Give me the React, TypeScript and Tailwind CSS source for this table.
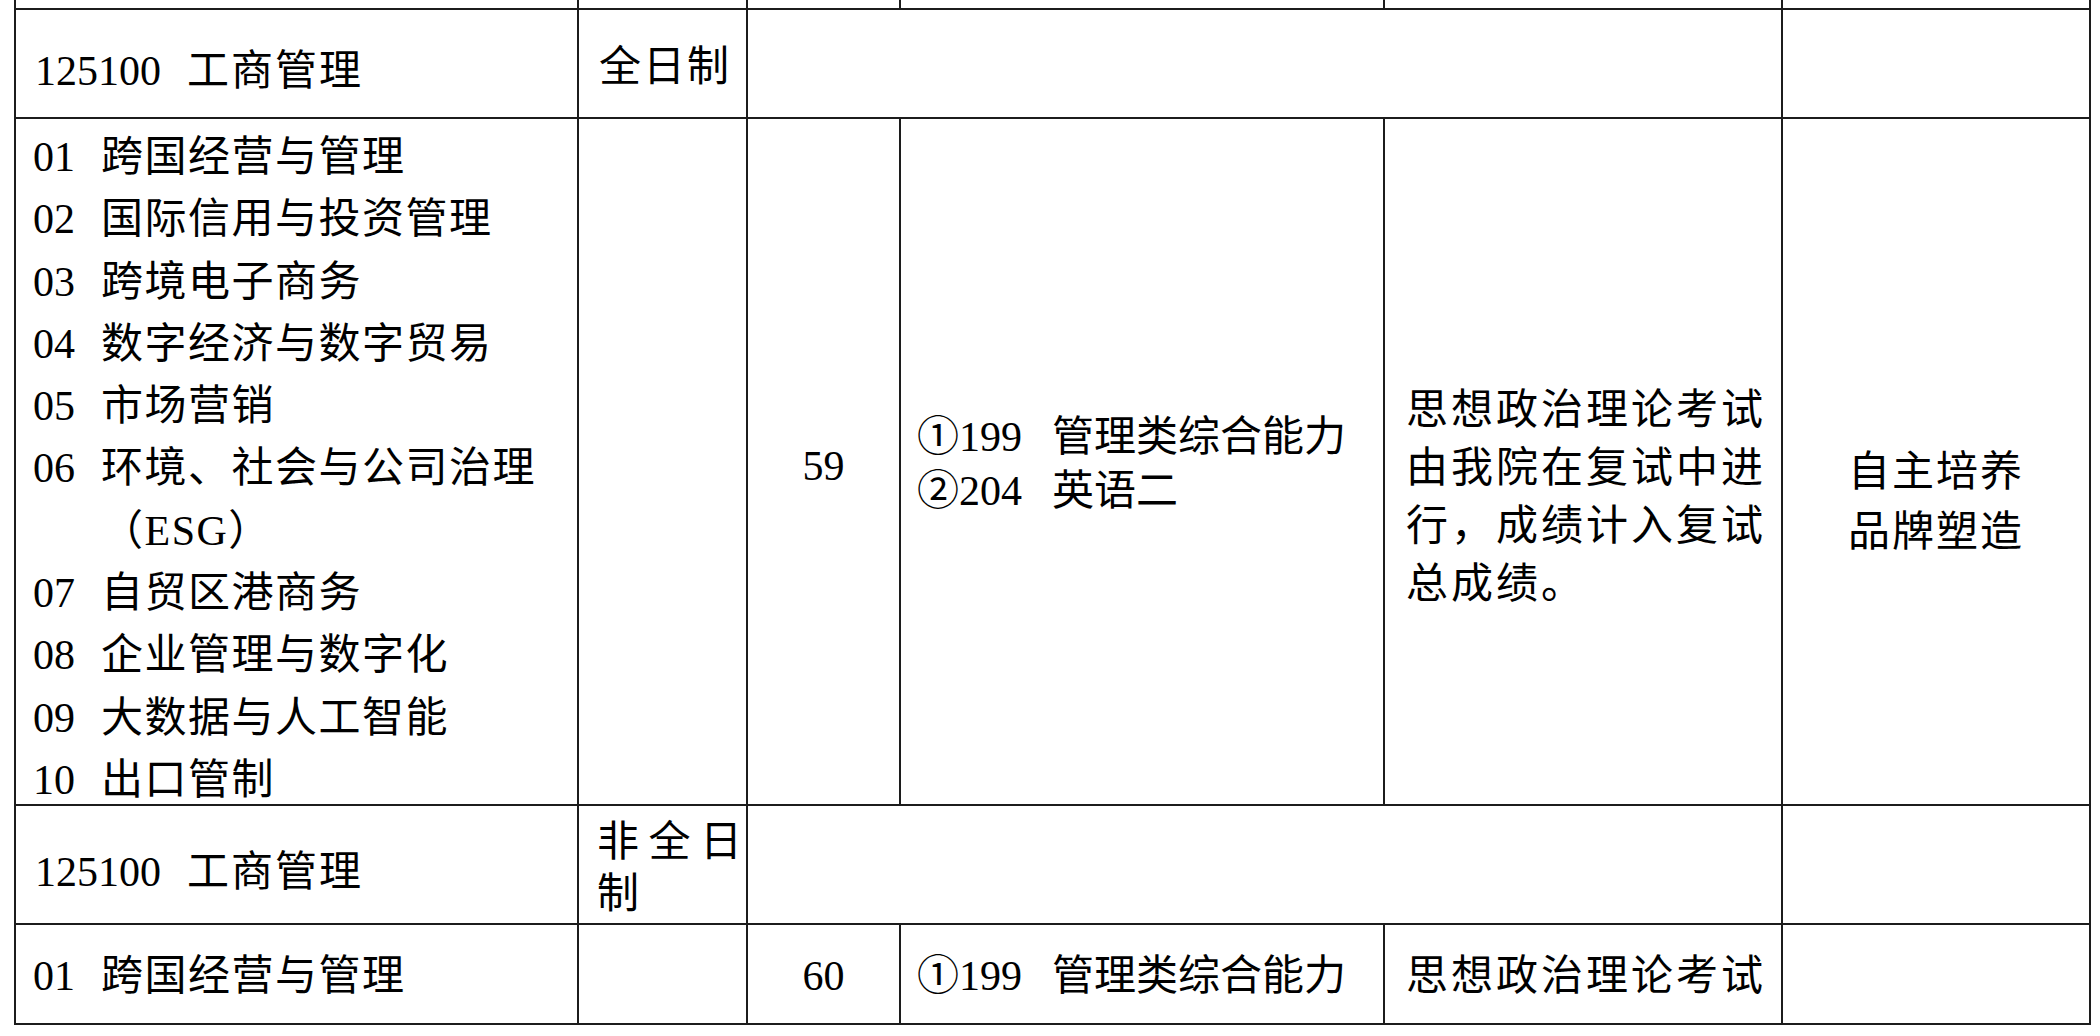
const line = "border-r-2 border-b-2 border-[#1c1c1c]";

const majors = [
  ["01", "跨国经营与管理"],
  ["02", "国际信用与投资管理"],
  ["03", "跨境电子商务"],
  ["04", "数字经济与数字贸易"],
  ["05", "市场营销"],
  ["06", "环境、社会与公司治理"],
  ["", "（ESG）"],
  ["07", "自贸区港商务"],
  ["08", "企业管理与数字化"],
  ["09", "大数据与人工智能"],
  ["10", "出口管制"],
];

const MajorLine = ({ num, name }: { num: string; name: string }) => (
  <div className="flex whitespace-nowrap">
    <span className="w-[68px] shrink-0">{num}</span>
    <span className="tracking-[1.5px]">{name}</span>
  </div>
);

const Code = () => (
  <span className="whitespace-nowrap">
    125100<span className="ml-[26px] tracking-[2px]">工商管理</span>
  </span>
);

const Subject = ({ code, name }: { code: string; name: string }) => (
  <div className="whitespace-nowrap">
    {code}
    <span className="ml-[30px]">{name}</span>
  </div>
);

const App = () => {
  return (
    <div className="h-[1036px] w-[2100px] overflow-hidden bg-white font-['Liberation_Serif','Noto_Sans_CJK_SC',serif] text-[42px] text-black">
      <div className="ml-[14px] grid w-[2077px] grid-cols-[563px_169px_153px_484px_398px_308px] grid-rows-[10px_109px_687px_119px_100px] border-l-2 border-[#1c1c1c]">
        {/* tail of the previous row */}
        <div className={line} />
        <div className={line} />
        <div className={line} />
        <div className={line} />
        <div className={line} />
        <div className={line} />

        {/* 全日制 heading */}
        <div className={`${line} flex items-center pl-[19px] pt-[15px]`}>
          <Code />
        </div>
        <div className={`${line} flex items-center pl-[20px] pt-[7px] tracking-[2px]`}>
          全日制
        </div>
        <div className={`${line} col-span-3`} />
        <div className={line} />

        {/* 全日制 directions */}
        <div className={`${line} pl-[17px] pt-[7px] leading-[62.3px]`}>
          {majors.map(([num, name], i) => (
            <MajorLine key={i} num={num} name={name} />
          ))}
        </div>
        <div className={line} />
        <div className={`${line} flex items-center justify-center pt-[10px]`}>59</div>
        <div className={`${line} flex flex-col justify-center pl-[16px] pt-[4px] leading-[54px]`}>
          <Subject code="①199" name="管理类综合能力" />
          <Subject code="②204" name="英语二" />
        </div>
        <div className={`${line} flex flex-col justify-center pl-[21px] pt-[70px] leading-[58px] tracking-[3px] whitespace-nowrap`}>
          <div>思想政治理论考试</div>
          <div>由我院在复试中进</div>
          <div>行，成绩计入复试</div>
          <div>总成绩。</div>
        </div>
        <div className={`${line} flex flex-col items-center justify-center pt-[80px] leading-[60px] tracking-[2px]`}>
          <div>自主培养</div>
          <div>品牌塑造</div>
        </div>

        {/* 非全日制 heading */}
        <div className={`${line} flex items-center pl-[19px] pt-[16px]`}>
          <Code />
        </div>
        <div className={`${line} flex flex-col justify-center pl-[18px] pt-[6px] leading-[52px]`}>
          <div className="flex w-[145px] justify-between">
            <span>非</span>
            <span>全</span>
            <span>日</span>
          </div>
          <div>制</div>
        </div>
        <div className={`${line} col-span-3`} />
        <div className={line} />

        {/* 非全日制 directions */}
        <div className={`${line} flex items-center pl-[17px] pt-[5px]`}>
          <MajorLine num="01" name="跨国经营与管理" />
        </div>
        <div className={line} />
        <div className={`${line} flex items-center justify-center pt-[4px]`}>60</div>
        <div className={`${line} flex items-center pl-[16px] pt-[4px]`}>
          <Subject code="①199" name="管理类综合能力" />
        </div>
        <div className={`${line} flex items-center pl-[21px] pt-[4px] tracking-[3px] whitespace-nowrap`}>
          思想政治理论考试
        </div>
        <div className={line} />
      </div>
    </div>
  );
};

export default App;
